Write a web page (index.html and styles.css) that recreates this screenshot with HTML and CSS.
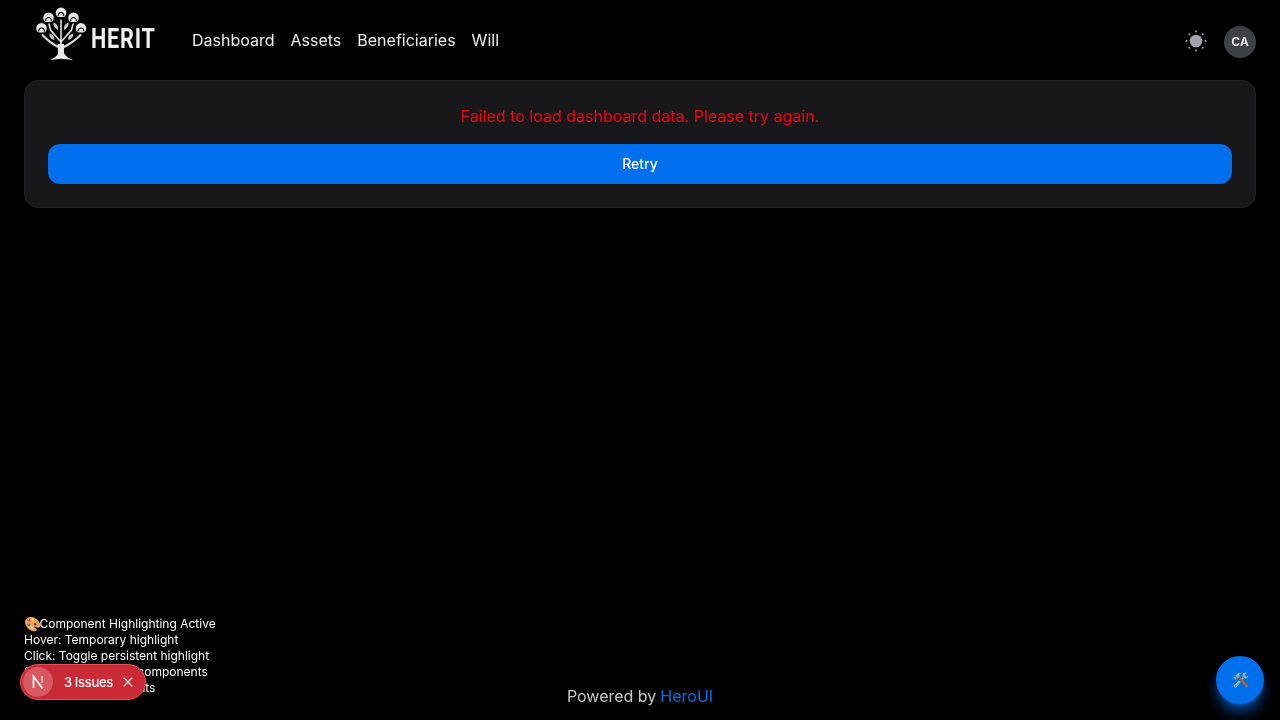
FILE: index.html
```html
<!DOCTYPE html>
<html lang="en">
<head>
<meta charset="utf-8">
<title>Herit</title>
<link rel="stylesheet" href="styles.css">
</head>
<body>
<div class="page">
  <header class="navbar">
    <div class="nav-left">
      <a class="brand">
        <svg class="logo" viewBox="36 6 52 56" width="52" height="56" fill="none">
          <defs>
            <g id="head">
              <path d="M-3.800 4 A5.300 5.300 0 1 1 3.800 4 Q0 5.200 -3.800 4 Z" fill="#e8e8e8"/>
              <path d="M-2.700 3.500 A2.800 2.800 0 1 1 2.700 3.500" stroke="#000" stroke-width="1.100"/>
            </g>
          </defs>
          <g stroke="#dcdcdc" stroke-linecap="round">
            <path d="M61 46 L61 20" stroke-width="1.600"/>
            <path d="M61 42 L50.500 30 L49 24" stroke-width="1.600"/>
            <path d="M61 42 L71.500 30 L73 24" stroke-width="1.600"/>
            <path d="M60 48 C54 45 48 41 42.500 35" stroke-width="2"/>
            <path d="M62 48 C68 45 75 41 80.500 35" stroke-width="2"/>
          </g>
          <path d="M58 44 L64 44 L64 53 C65 56 69 58 73 60 L61 58.800 L50 60 C54 58 57.500 56 58 53 Z" fill="#e8e8e8"/>
          <g fill="#c8c8c8">
            <path d="M57.800 30 C54.200 28 53 25 53.500 22.500 C57 24 58.800 26.500 57.800 30 Z"/>
            <path d="M64.200 30 C67.800 28 69 25 68.500 22.500 C65 24 63.200 26.500 64.200 30 Z"/>
            <path d="M54 40 C50.500 39 49 36 49.500 33.500 C53 34.500 55 37 54 40 Z"/>
            <path d="M68.500 40 C72 39 73.500 36 73 33.500 C69.500 34.500 67.500 37 68.500 40 Z"/>
          </g>
          <use href="#head" x="61" y="12.500"/>
          <use href="#head" x="48.500" y="17.500"/>
          <use href="#head" x="73.500" y="17.500"/>
          <use href="#head" x="41.500" y="28"/>
          <use href="#head" x="81" y="28"/>
        </svg>
        <span class="brand-box"><span class="brand-name">HERIT</span></span>
      </a>
      <nav class="links">
        <a>Dashboard</a>
        <a>Assets</a>
        <a>Beneficiaries</a>
        <a>Will</a>
      </nav>
    </div>
    <div class="nav-right">
      <svg class="sun" viewBox="0 0 24 24" width="24" height="24">
        <circle cx="12" cy="12" r="6.300" fill="#a1a1aa"/>
        <g fill="#a1a1aa">
          <circle cx="12" cy="2.500" r="1"/><circle cx="12" cy="21.500" r="1"/>
          <circle cx="2.500" cy="12" r="1"/><circle cx="21.500" cy="12" r="1"/>
          <circle cx="5.300" cy="5.300" r="1"/><circle cx="18.700" cy="5.300" r="1"/>
          <circle cx="5.300" cy="18.700" r="1"/><circle cx="18.700" cy="18.700" r="1"/>
        </g>
      </svg>
      <div class="avatar">CA</div>
    </div>
  </header>

  <main class="main">
    <section class="card">
      <p class="error">Failed to load dashboard data. Please try again.</p>
      <button class="retry">Retry</button>
    </section>
  </main>

  <footer class="footer">Powered by <a class="hero">HeroUI</a></footer>
</div>

<div class="hint">
  <div class="hint-title"><span class="emoji">🎨</span>Component Highlighting Active</div>
  <div>Hover: Temporary highlight</div>
  <div>Click: Toggle persistent highlight</div>
  <div>Shift+Click: Inspect components</div>
  <div>Esc: Clear all highlights</div>
</div>

<div class="issues">
  <span class="next-logo">
    <svg viewBox="0 0 16 16" width="16" height="16" fill="none" stroke="#fff" stroke-width="1.700">
      <path d="M3.500 14 V2.500 L12.500 14.500"/>
      <path d="M12 2 V9" stroke-opacity=".6"/>
    </svg>
  </span>
  <span class="issue-text"><span class="count">3</span>Issues</span>
  <svg class="close" viewBox="0 0 10 10" width="10" height="10" fill="none" stroke="#fff" stroke-width="1.200">
    <path d="M.7 .7 L9.300 9.300 M9.300 .7 L.7 9.300"/>
  </svg>
</div>

<button class="fab">🛠️</button>
</body>
</html>
```

FILE: styles.css
```css
* { box-sizing: border-box; }

html, body {
  margin: 0;
  height: 100%;
  background: #000;
  color: #ecedee;
  font-family: Inter, "Liberation Sans", sans-serif;
}

.page {
  display: flex;
  flex-direction: column;
  height: 720px;
  overflow: hidden;
  will-change: transform;
}

.navbar {
  flex: none;
  height: 80px;
  padding: 0 24px;
  display: flex;
  align-items: center;
  justify-content: space-between;
}

.nav-left {
  display: flex;
  align-items: center;
  gap: 36px;
}

.brand {
  display: flex;
  align-items: center;
  gap: 3px;
  padding-left: 12px;
}

.logo {
  display: block;
  margin-top: -12px;
}

.brand-box {
  display: block;
  width: 65px;
  margin-top: -2px;
}

.brand-name {
  display: block;
  width: 80px;
  font-family: Roboto, sans-serif;
  font-weight: 700;
  font-size: 27px;
  letter-spacing: 1px;
  color: #f0f0f0;
  line-height: 1;
  transform: scaleX(0.8);
  transform-origin: left center;
}

.links {
  display: flex;
  gap: 16px;
  font-size: 16px;
  line-height: 24px;
  color: #ecedee;
}

.nav-right {
  display: flex;
  align-items: center;
  gap: 16px;
  margin-top: 4px;
}

.sun {
  display: block;
  margin-bottom: 3px;
}

.avatar {
  width: 32px;
  height: 32px;
  border-radius: 50%;
  background: #3f3f46;
  color: #fff;
  font-size: 12px;
  font-weight: 600;
  padding-bottom: 1px;
  display: flex;
  align-items: center;
  justify-content: center;
}

.main {
  flex: 1;
  padding: 0 24px;
}

.card {
  height: 128px;
  padding: 23px;
  background: #18181b;
  border-radius: 14px;
  border: 1px solid #202023;
  display: flex;
  flex-direction: column;
  gap: 16px;
}

.error {
  margin: 0;
  text-align: center;
  color: #f20012;
  font-size: 16px;
  line-height: 24px;
}

.retry {
  flex: none;
  height: 40px;
  border: 0;
  border-radius: 12px;
  background: #006fee;
  color: #fff;
  font: 500 14px/20px Inter, "Liberation Sans", sans-serif;
}

.footer {
  flex: none;
  height: 48px;
  display: flex;
  align-items: center;
  justify-content: center;
  gap: 4px;
  color: #c6c6cc;
  font-size: 16px;
}

.hero { color: #006fee; }

.hint {
  position: fixed;
  left: 24px;
  top: 616px;
  font-size: 12px;
  line-height: 16px;
  color: #fff;
  will-change: transform;
}

.hint-title { display: flex; }

.emoji {
  width: 15.500px;
  font-size: 14px;
  line-height: 16px;
}

.issues {
  position: fixed;
  left: 20px;
  top: 664px;
  width: 126px;
  height: 36px;
  border-radius: 18px;
  background: #ca2a35;
  border: 1px solid #df5058;
  display: flex;
  align-items: center;
  padding-left: 2px;
  color: #fff;
  font-size: 13px;
  font-weight: 500;
  will-change: transform;
}

.next-logo {
  width: 30px;
  height: 30px;
  border-radius: 50%;
  background: #d8585f;
  display: flex;
  align-items: center;
  justify-content: center;
  flex: none;
}

.issue-text {
  margin-left: 11px;
  display: flex;
  gap: 3px;
  font-size: 13px;
  letter-spacing: -0.3px;
}

.close { margin-left: 10px; }

.fab {
  position: fixed;
  left: 1216px;
  top: 656px;
  width: 48px;
  height: 48px;
  border: 0;
  padding: 0;
  border-radius: 50%;
  background: #006fee;
  font-size: 14px;
  box-shadow: 0 10px 15px -3px rgba(0, 111, 238, 0.7), 0 4px 6px -4px rgba(0, 111, 238, 0.7);
}
```
